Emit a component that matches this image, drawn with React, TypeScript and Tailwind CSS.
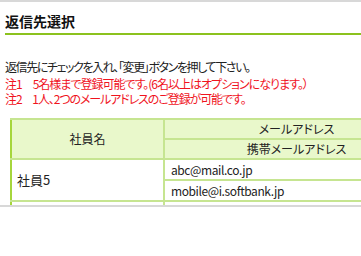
const jp = "font-['MS_PGothic','Noto_Sans_CJK_JP',sans-serif] [font-feature-settings:'palt']";

const rows = [
  { name: "社員5", mails: ["abc@mail.co.jp", "mobile@i.softbank.jp"] },
  { name: "", mails: ["", ""] },
];

export default function App() {
  return (
    <div className={`w-[361px] h-[256px] bg-white overflow-hidden text-[#222] ${jp}`}>
      <div className="h-[207px] border-t-2 border-b-2 border-[#d8d8d8] overflow-hidden">
        {/* heading */}
        <div className="ml-[5px] pt-[9px] border-b-2 border-[#8cc21e] pb-[2px]">
          <h1 className="text-[14px] font-bold leading-[20px] text-[#111]">返信先選択</h1>
        </div>

        <div className="px-[5px] mt-[24px] text-[12px] leading-[15px]">
          <p className="tracking-[-1.4px]">返信先にチェックを入れ、「変更」ボタンを押して下さい。</p>
          <p className="mt-[2px] tracking-[-1px] text-[#f0141e]">注1　5名様まで登録可能です。(6名以上はオプションになります。）</p>
          <p className="tracking-[-1.1px] text-[#f0141e]">注2　1人、2つのメールアドレスのご登録が可能です。</p>
        </div>

        <table className="ml-[10px] mt-[12px] w-[420px] border-collapse text-[12px] leading-[14px] border-l-2 border-l-[#a6d63c]">
          <thead>
            <tr className="bg-[#e9f8cb]">
              <th rowSpan={2} className="w-[153px] border-2 border-[#c6e591] border-l-[#a6d63c] font-normal">社員名</th>
              <th className="h-[20px] border-2 border-[#c6e591] font-normal">メールアドレス</th>
            </tr>
            <tr className="bg-[#e9f8cb]">
              <th className="h-[20px] border-2 border-[#c6e591] font-normal">携帯メールアドレス</th>
            </tr>
          </thead>
          <tbody>
            {rows.map((r, i) => (
              <>
                <tr key={`a${i}`}>
                  <td rowSpan={2} className="pl-[5px] border-2 border-[#c6e591] border-l-[#a6d63c] text-[13px]">{r.name}</td>
                  <td className="h-[21px] pl-[6px] border-2 border-[#c6e591] tracking-[-0.4px]">{r.mails[0]}</td>
                </tr>
                <tr key={`b${i}`}>
                  <td className="h-[21px] pl-[6px] border-2 border-[#c6e591] tracking-[-0.4px]">{r.mails[1]}</td>
                </tr>
              </>
            ))}
          </tbody>
        </table>
      </div>
    </div>
  );
}
